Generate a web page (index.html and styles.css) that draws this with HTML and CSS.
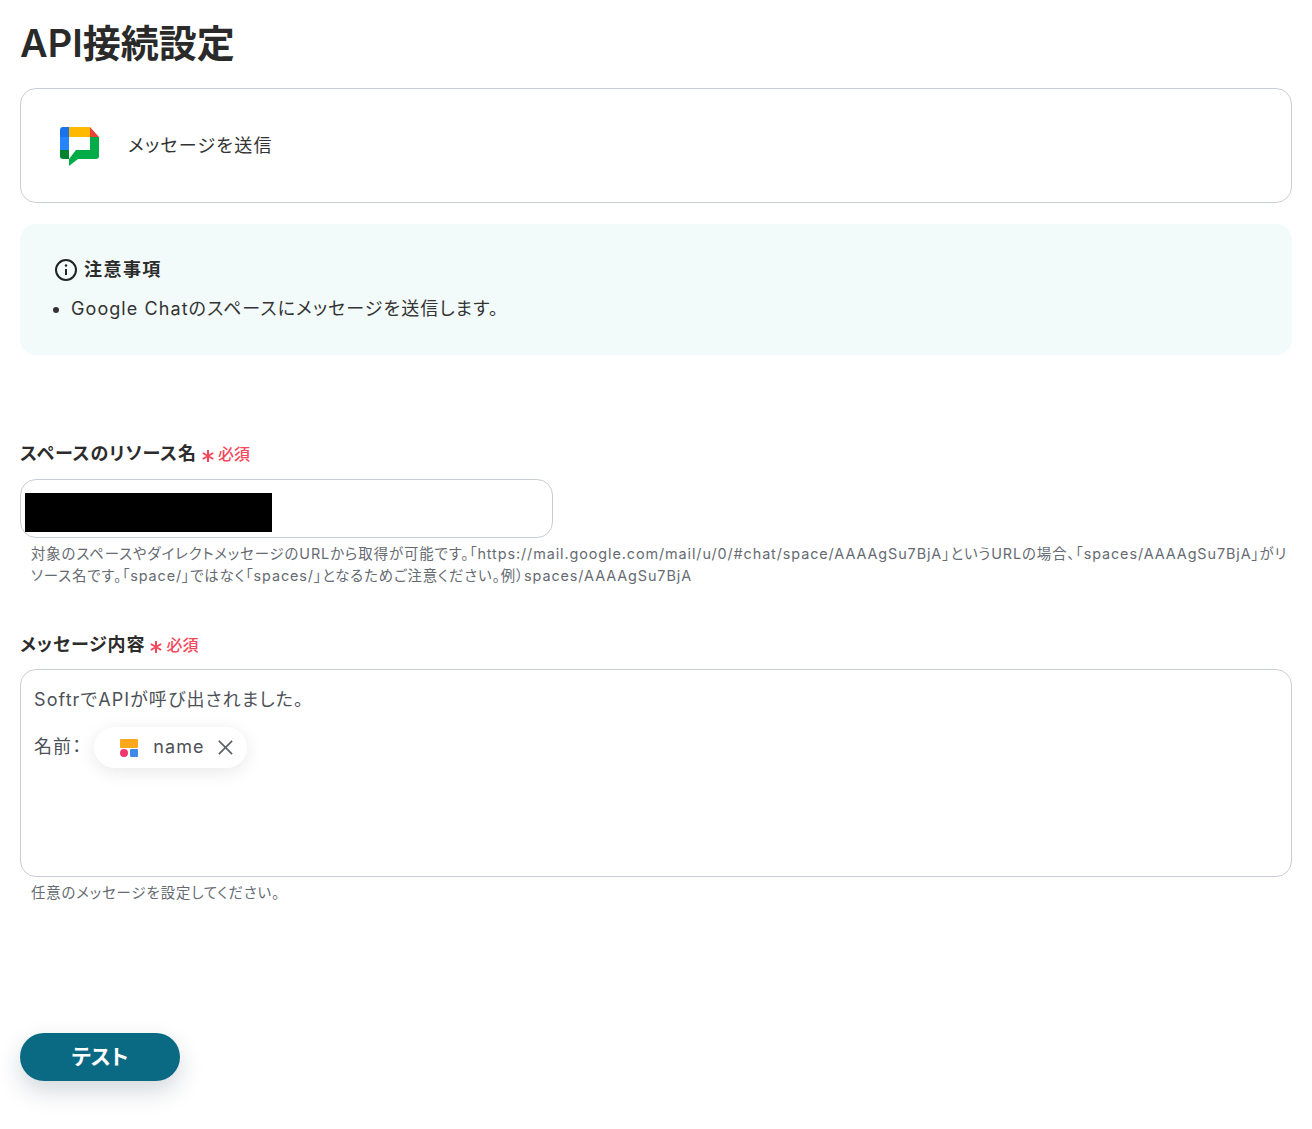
FILE: index.html
```html
<!DOCTYPE html>
<html lang="ja">
<head>
    <meta charset="UTF-8">
    <title>API接続設定</title>
    <link rel="stylesheet" href="styles.css">
</head>
<body>
    <div class="container">
        <h1>API接続設定</h1>

        <div class="action-card">
            <svg class="chat-logo" width="40" height="40" viewBox="0 0 40 40">
                <path fill="#1a73e8" d="M0 3a3 3 0 0 1 3-3h6v10H0z"/>
                <path fill="#2684fc" d="M0 10h9v13H0z"/>
                <path fill="#00832d" d="M0 23h9v9H3a3 3 0 0 1-3-3z"/>
                <path fill="#ffba00" d="M9 0h21v10H9z"/>
                <path fill="#ea4335" d="M30 0l9 10h-9z"/>
                <path fill="#00ac47" d="M30 10h9v19a3 3 0 0 1-3 3H18l-9 7V32l7-9h14z"/>
            </svg>
            <span class="action-name">メッセージを送信</span>
        </div>

        <div class="notice">
            <div class="notice-title">
                <svg width="24" height="24" viewBox="0 0 24 24" fill="none" stroke="#222" stroke-width="2">
                    <circle cx="12" cy="12" r="10"/>
                    <path d="M12 11v6"/>
                    <circle cx="12" cy="7.5" r="1.2" fill="#222" stroke="none"/>
                </svg>
                <span>注意事項</span>
            </div>
            <ul>
                <li>Google Chatのスペースにメッセージを送信します。</li>
            </ul>
        </div>

        <div class="field first-field">
            <div class="field-label">
                <span>スペースのリソース名</span>
                <svg class="star" width="14" height="14" viewBox="0 0 14 14" stroke="#f4475b" stroke-width="2"><path d="M7 1v12M1.8 4l10.4 6M12.2 4L1.8 10"/></svg>
                <span class="required">必須</span>
            </div>
            <div class="text-input">
                <div class="masked"></div>
            </div>
            <p class="help">対象のスペースやダイレクトメッセージのURLから取得が可能です。「https://mail.google.com/mail/u/0/#chat/space/AAAAgSu7BjA」というURLの場合、「spaces/AAAAgSu7BjA」がリ<br>ソース名です。「space/」ではなく「spaces/」となるためご注意ください。例）spaces/AAAAgSu7BjA</p>
        </div>

        <div class="field second-field">
            <div class="field-label">
                <span>メッセージ内容</span>
                <svg class="star" width="14" height="14" viewBox="0 0 14 14" stroke="#f4475b" stroke-width="2"><path d="M7 1v12M1.8 4l10.4 6M12.2 4L1.8 10"/></svg>
                <span class="required">必須</span>
            </div>
            <div class="textarea">
                <p class="line">SoftrでAPIが呼び出されました。</p>
                <div class="line line-tag">
                    <span class="tag-label">名前：</span>
                    <span class="tag">
                        <svg width="20" height="20" viewBox="0 0 20 20">
                            <rect x="1" y="1" width="18" height="9" rx="1" fill="#ffa81c"/>
                            <circle cx="5" cy="15" r="4" fill="#f0386b"/>
                            <rect x="11" y="11" width="8" height="8" rx="1" fill="#3f8ae8"/>
                        </svg>
                        <span class="tag-name">name</span>
                        <svg width="17" height="17" viewBox="0 0 18 18" fill="none" stroke="#5a5f66" stroke-width="1.7">
                            <path d="M2 2l14 14M16 2L2 16"/>
                        </svg>
                    </span>
                </div>
            </div>
            <p class="help">任意のメッセージを設定してください。</p>
        </div>

        <button class="test-btn">テスト</button>
    </div>
</body>
</html>
```

FILE: styles.css
```css
body {
    margin: 0;
    font-family: Inter, "Noto Sans CJK JP", sans-serif;
    font-feature-settings: "palt";
    letter-spacing: 0.05em;
    color: #2c2c2c;
    background-color: #fff;
}
.container {
    padding: 18px 20px 48px;
}
h1 {
    margin: 0;
    font-size: 38px;
    line-height: 50px;
    font-weight: 600;
    letter-spacing: 0;
    color: #2a2a2a;
}
.action-card {
    display: flex;
    align-items: center;
    margin-top: 20px;
    height: 113px;
    padding-left: 39px;
    border: 1px solid #c9cdd4;
    border-radius: 16px;
}
.chat-logo {
    margin: 2px 28px 0 0;
}
.action-name {
    padding-bottom: 4px;
    font-size: 18px;
    letter-spacing: 0.07em;
    color: #333;
}
.notice {
    margin-top: 21px;
    height: 131px;
    box-sizing: border-box;
    padding: 30px 30px 0;
    background-color: #f2fafa;
    border-radius: 16px;
}
.notice-title {
    display: flex;
    align-items: center;
    gap: 6px;
    margin-left: 4px;
    font-size: 18px;
    font-weight: 700;
    letter-spacing: 0.08em;
    color: #2c2c2c;
}
.notice-title svg {
    margin-top: 4px;
}
.notice ul {
    margin: 12px 0 0;
    padding-left: 21px;
    font-size: 18px;
    line-height: 30px;
    letter-spacing: 0.06em;
    color: #333;
}
.first-field {
    margin-top: 86px;
}
.second-field {
    margin-top: 45px;
}
.field-label {
    display: flex;
    align-items: center;
    font-size: 18px;
    font-weight: 700;
    line-height: 26px;
    letter-spacing: 0.05em;
    color: #2c2c2c;
}
.star {
    margin: 4px 3px 0 4px;
}
.required {
    font-size: 16px;
    font-weight: 500;
    letter-spacing: 0;
    color: #f4475b;
}
.text-input {
    display: flex;
    align-items: flex-start;
    box-sizing: border-box;
    width: 533px;
    height: 59px;
    margin-top: 12px;
    padding: 13px 0 0 4px;
    border: 1px solid #c9cdd4;
    border-radius: 16px;
}
.masked {
    width: 247px;
    height: 39px;
    background-color: #000;
}
.help {
    margin: 5px 0 0;
    padding-left: 11px;
    font-size: 14.4px;
    line-height: 22px;
    letter-spacing: 0.063em;
    white-space: nowrap;
    color: #666b72;
}
.textarea {
    box-sizing: border-box;
    height: 208px;
    margin-top: 11px;
    padding: 16px 13px 0;
    border: 1px solid #c9cdd4;
    border-radius: 16px;
    font-size: 18px;
    letter-spacing: 0.06em;
    color: #4c5157;
}
.line {
    margin: 0;
    line-height: 28px;
}
.line-tag {
    display: flex;
    align-items: center;
    gap: 12px;
    margin-top: 13px;
}
.tag-label {
    padding-bottom: 2px;
}
.tag {
    display: flex;
    align-items: center;
    box-sizing: border-box;
    width: 153px;
    height: 41px;
    padding-left: 25px;
    border-radius: 21px;
    background-color: #fff;
    box-shadow: 0 4px 18px rgba(0, 0, 0, 0.09);
}
.tag-name {
    margin-left: 14px;
    margin-right: 12px;
    padding-bottom: 2px;
}
.test-btn {
    display: block;
    width: 160px;
    height: 48px;
    margin-top: 129px;
    padding-bottom: 5px;
    border: none;
    border-radius: 24px;
    background-color: #0a6a84;
    color: #fff;
    font-family: inherit;
    font-feature-settings: inherit;
    letter-spacing: 0;
    font-size: 21px;
    font-weight: 700;
    box-shadow: 0 10px 24px rgba(0, 40, 60, 0.18);
}
```
